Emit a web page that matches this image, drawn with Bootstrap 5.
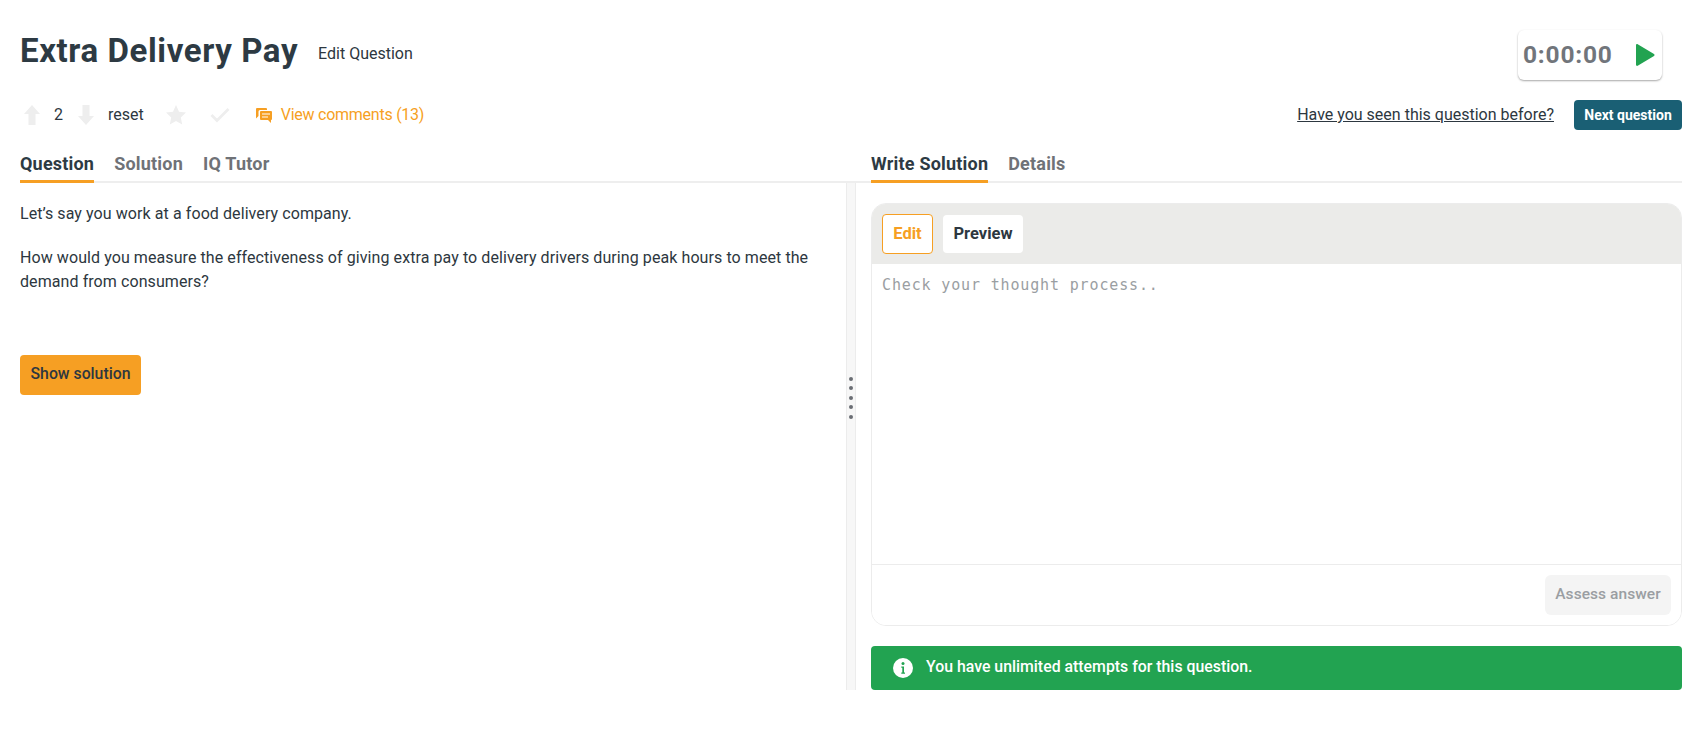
<!DOCTYPE html>
<html lang="en">
<head>
<meta charset="utf-8">
<title>Extra Delivery Pay</title>
<link href="https://cdn.jsdelivr.net/npm/bootstrap@5.3.0/dist/css/bootstrap.min.css" rel="stylesheet">
<style>
html,body{height:744px;overflow:hidden;background:#fff}
body{font-family:Roboto,"Liberation Sans",sans-serif;color:#2d3740;font-size:16px;line-height:24px}
.page-wrap{padding:30px 24px 0 20px}
.title-row{height:50px}
.q-title{font-size:33px;line-height:44px;font-weight:700;margin:0;color:#2d3a43;letter-spacing:.6px}
.edit-q{margin-left:20px;color:#2d3740;text-decoration:none;font-size:16px;padding-top:6px}
.timer-box{width:144px;height:50px;border-radius:6px;box-shadow:0 1px 2px rgba(0,0,0,.35);padding:0 7px 0 5px;margin-right:20px}
.timer-text{font-size:24.5px;font-weight:700;color:#71757b;letter-spacing:.8px}
.meta-row{height:30px;margin-top:20px}
.meta-ic{display:block;flex:none}
.reset-link{color:#2d3740;text-decoration:none}
.comments-link{color:#f69f23;text-decoration:none;letter-spacing:-.25px;margin-left:9px}
.seen-link{color:#2d3740;font-size:16px}
.btn-next{background:#1a5f74;color:#fff;font-size:14px;font-weight:700;padding:0;height:30px;line-height:30px;border:0;border-radius:4px;width:108px}
.tabs-bar{height:33px;margin-top:20px;border-bottom:2px solid #eee}
.tabs-left{width:851px}
.tab-item{padding:0;margin-right:20px;height:33px;line-height:27px;font-weight:700;font-size:18px;color:#6f7277;letter-spacing:.2px}
.tab-item.on{color:#2d3a43;border-bottom:3px solid #f69f23}
.panes{height:507px}
.pane-left{width:826px;padding-top:19px;letter-spacing:.08px}
.pane-left p{margin:0 0 20px}
.btn-show{background:#f69f23;color:#2d3740;border:0;border-radius:4px;height:40px;width:121px;padding:0 0 2px;font-size:15.8px;font-weight:500;margin-top:41px}
.split-bar{width:10px;background:#f7f7f7;border-left:1px solid #ececec;border-right:1px solid #ececec;padding-bottom:78px}
.split-bar i{display:block;width:4px;height:4px;border-radius:50%;background:#6b6e74;margin:3px 0 2.5px}
.pane-right{margin-left:15px;width:811px;padding-top:20px}
.editor-card{height:423px;border:1px solid #ececec;border-radius:15px;overflow:hidden}
.editor-head{height:60px;background:#ebebe9;border:0;border-radius:0;padding:10px 10px;gap:10px}
.mode-btn{height:38px;width:80px;padding:0;background:#fff;border:0;border-radius:4px;color:#2d3740;font-size:16.5px;font-weight:700;margin-top:1px}
.mode-btn.on{height:40px;width:51px;margin-top:0;border:1px solid #f69f23;color:#f69f23}
.answer-box{height:300px;border:0;border-radius:0;padding:10px 10px;resize:none;font-family:"DejaVu Sans Mono",monospace;font-size:15px;letter-spacing:.85px;box-shadow:none}
.answer-box::placeholder{color:#9a9ea2}
.editor-foot{height:61px;background:#fff;border-top:1px solid #ececec;padding:10px}
.btn-assess{background:#f4f4f4;color:#9a9ea2;border:0;border-radius:6px;width:126px;height:40px;padding:0;font-size:15.5px;font-weight:500;letter-spacing:.07px}
.notice-bar{height:44px;margin:20px 0 0;background:#22a351;color:#fff;border:0;border-radius:4px;padding:0 22px;gap:13px;font-weight:500;font-size:15.85px}
.notice-bar span{padding-bottom:2px}
</style>
</head>
<body>
<div class="page-wrap">
  <div class="title-row d-flex justify-content-between align-items-center">
    <div class="d-flex align-items-center mb-2">
      <h1 class="q-title">Extra Delivery Pay</h1>
      <a class="edit-q" href="#">Edit Question</a>
    </div>
    <div class="timer-box d-flex justify-content-between align-items-center bg-white">
      <span class="timer-text">0:00:00</span>
      <svg width="20" height="24" viewBox="0 0 20 24" aria-hidden="true"><path d="M1 2.2v19.6c0 .9.9 1.4 1.7 1L19 12.9c.7-.4.7-1.4 0-1.8L2.7 1.2C1.9.8 1 1.3 1 2.2z" fill="#22a351"/></svg>
    </div>
  </div>

  <div class="meta-row d-flex justify-content-between align-items-center">
    <div class="d-flex align-items-center">
      <svg class="meta-ic" style="margin-left:4px" width="16" height="20" viewBox="0 0 16 20"><path d="M8 0l8 9h-4.500v11h-7V9H0z" fill="#eeeeee"/></svg>
      <span style="margin-left:14px">2</span>
      <svg class="meta-ic" style="margin-left:15px" width="16" height="20" viewBox="0 0 16 20"><path d="M8 20L0 11h4.500V0h7v11H16z" fill="#eeeeee"/></svg>
      <a class="reset-link" style="margin-left:14px" href="#">reset</a>
      <svg class="meta-ic" style="margin-left:22px" width="20" height="20" viewBox="0 0 20 20"><path d="M10 0l3 6.800 7 .8-5.200 4.800 1.400 7.200L10 16.100 3.800 19.600l1.400-7.200L0 7.600l7-.8z" fill="#eeeeee"/></svg>
      <svg class="meta-ic" style="margin-left:24px" width="20" height="16" viewBox="0 0 20 16"><path d="M1.500 8l5.500 5.500L18.500 2" fill="none" stroke="#eeeeee" stroke-width="2.800"/></svg>
      <svg class="meta-ic" style="margin-left:26px" width="16" height="15" viewBox="0 0 16 15"><path d="M0 1a1 1 0 011-1h9a1 1 0 011 1v1H4a1.500 1.500 0 00-1.500 1.500V8L0 10.500z" fill="#f69f23"/><path d="M4 4a1 1 0 011-1h10a1 1 0 011 1v7a1 1 0 01-1 1v3l-3-3H5a1 1 0 01-1-1z" fill="#f69f23"/><path d="M6 6h8M6 9h6" stroke="#fff" stroke-width="1.200"/></svg>
      <a class="comments-link" href="#">View comments (13)</a>
    </div>
    <div class="d-flex align-items-center">
      <a class="seen-link" href="#">Have you seen this question before?</a>
      <button class="btn btn-next" style="margin-left:20px" type="button">Next question</button>
    </div>
  </div>

  <div class="tabs-bar d-flex">
    <nav class="tabs-left nav">
      <a class="nav-link tab-item on" href="#">Question</a>
      <a class="nav-link tab-item" href="#">Solution</a>
      <a class="nav-link tab-item" href="#">IQ Tutor</a>
    </nav>
    <nav class="nav">
      <a class="nav-link tab-item on" href="#">Write Solution</a>
      <a class="nav-link tab-item" href="#">Details</a>
    </nav>
  </div>

  <div class="panes d-flex">
    <div class="pane-left">
      <p>Let’s say you work at a food delivery company.</p>
      <p>How would you measure the effectiveness of giving extra pay to delivery drivers during peak hours to meet the demand from consumers?</p>
      <button class="btn btn-show" type="button">Show solution</button>
    </div>
    <div class="split-bar d-flex flex-column align-items-center justify-content-center"><i></i><i></i><i></i><i></i><i></i></div>
    <div class="pane-right">
      <div class="card editor-card">
        <div class="card-header editor-head d-flex">
          <button class="btn mode-btn on" type="button">Edit</button>
          <button class="btn mode-btn" type="button">Preview</button>
        </div>
        <textarea class="form-control answer-box" placeholder="Check your thought process.."></textarea>
        <div class="card-footer editor-foot d-flex justify-content-end">
          <button class="btn btn-assess" type="button">Assess answer</button>
        </div>
      </div>
      <div class="alert notice-bar d-flex align-items-center" role="alert">
        <svg width="20" height="20" viewBox="0 0 20 20" aria-hidden="true"><circle cx="10" cy="10" r="10" fill="#fff"/><circle cx="10" cy="5.600" r="1.500" fill="#22a351"/><path d="M8.300 8.500h2.700v6h1v1.300H8.300v-1.300h1v-4.700h-1z" fill="#22a351"/></svg>
        <span>You have unlimited attempts for this question.</span>
      </div>
    </div>
  </div>
</div>
<script src="https://cdn.jsdelivr.net/npm/bootstrap@5.3.0/dist/js/bootstrap.bundle.min.js"></script>
</body>
</html>
